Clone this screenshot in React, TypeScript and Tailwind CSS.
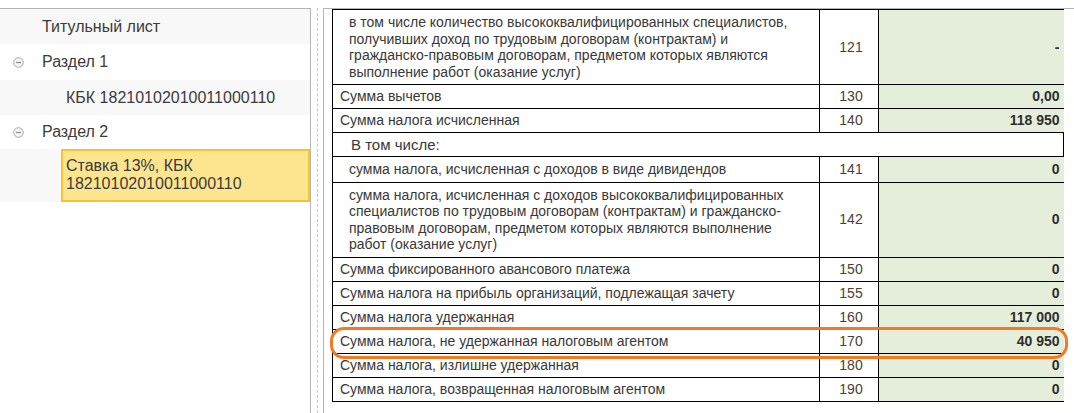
import React from 'react';

interface Row {
  label: string[];
  code?: string;
  value?: string;
  indent?: boolean;
  heading?: boolean;
}

const rows: Row[] = [
  {
    label: [
      'в том числе количество высококвалифицированных специалистов,',
      'получивших доход по трудовым договорам (контрактам) и',
      'гражданско-правовым договорам, предметом которых являются',
      'выполнение работ (оказание услуг)',
    ],
    code: '121',
    value: '-',
    indent: true,
  },
  { label: ['Сумма вычетов'], code: '130', value: '0,00' },
  { label: ['Сумма налога исчисленная'], code: '140', value: '118 950' },
  { label: ['В том числе:'], heading: true },
  { label: ['сумма налога, исчисленная с доходов в виде дивидендов'], code: '141', value: '0', indent: true },
  {
    label: [
      'сумма налога, исчисленная с доходов высококвалифицированных',
      'специалистов по трудовым договорам (контрактам) и гражданско-',
      'правовым договорам, предметом которых являются выполнение',
      'работ (оказание услуг)',
    ],
    code: '142',
    value: '0',
    indent: true,
  },
  { label: ['Сумма фиксированного авансового платежа'], code: '150', value: '0' },
  { label: ['Сумма налога на прибыль организаций, подлежащая зачету'], code: '155', value: '0' },
  { label: ['Сумма налога удержанная'], code: '160', value: '117 000' },
  { label: ['Сумма налога, не удержанная налоговым агентом'], code: '170', value: '40 950' },
  { label: ['Сумма налога, излишне удержанная'], code: '180', value: '0' },
  { label: ['Сумма налога, возвращенная налоговым агентом'], code: '190', value: '0' },
];

function MinusCircle() {
  return (
    <svg width="11" height="11" viewBox="0 0 11 11" className="shrink-0">
      <circle cx="5.5" cy="5.5" r="4.8" fill="#f4f4f4" stroke="#a8a8a8" strokeWidth="1" />
      <path d="M3 5.5h5" stroke="#8a8a8a" strokeWidth="1.2" />
    </svg>
  );
}

export default function App() {
  return (
    <div className="w-[1074px] h-[413px] bg-white flex pt-2 overflow-hidden font-['Liberation_Sans',Arial,sans-serif] text-[#333]">
      {/* Tree panel */}
      <div className="w-[311px] shrink-0 border-t border-r border-[#b4b4b4] text-[16px] text-[#3b3b3b]">
        <div className="h-[35px] bg-[#f8f8f8] flex items-center pl-[42px]">Титульный лист</div>
        <div className="h-[36px] bg-white flex items-center pl-[13px] gap-[18px]">
          <MinusCircle />
          <span>Раздел 1</span>
        </div>
        <div className="h-[35px] bg-[#f8f8f8] flex items-center pl-[66px]">КБК 18210102010011000110</div>
        <div className="h-[34px] bg-white flex items-center pl-[13px] gap-[18px]">
          <MinusCircle />
          <span>Раздел 2</span>
        </div>
        <div className="h-[53px] bg-[#f8f8f8] pl-[61px]">
          <div className="h-full bg-[#fde58f] border-2 border-[#f7c52a] px-[3px] pt-[6px] leading-[18px]">
            Ставка 13%, КБК
            <br />
            18210102010011000110
          </div>
        </div>
      </div>

      {/* Splitter */}
      <div className="w-[12px] shrink-0 flex justify-center">
        <div className="w-0 h-full border-l border-dashed border-[#c8c8c8]" />
      </div>

      {/* Form panel */}
      <div className="flex-1 border-t border-l border-[#b4b4b4] pl-2">
        <div className="relative w-[731px]">
          <table className="w-[731px] table-fixed border-collapse text-[14px] text-[#383838]">
            <colgroup>
              <col className="w-[487px]" />
              <col className="w-[59px]" />
              <col className="w-[185px]" />
            </colgroup>
            <tbody>
              {rows.map((row) =>
                row.heading ? (
                  <tr key={row.label[0]} className="h-[24px]">
                    <td colSpan={3} className="border border-black pl-[18px] text-[15px] leading-[16px]">
                      {row.label[0]}
                    </td>
                  </tr>
                ) : (
                  <tr key={row.code} className="h-[24px]">
                    <td
                      className={`border border-black leading-[16.5px] whitespace-nowrap overflow-hidden ${
                        row.indent ? 'pl-[16px] py-[4px]' : 'pl-[7px]'
                      }`}
                    >
                      {row.label.map((line, i) => (
                        <div key={i}>{line}</div>
                      ))}
                    </td>
                    <td className="border border-black text-center pl-[4px] text-[#4a4038]">{row.code}</td>
                    <td className="border-y border-l border-black bg-[#e5eedb] text-right pr-[4px] font-bold text-[14px] text-[#2e2e2e]">
                      {row.value}
                    </td>
                  </tr>
                ),
              )}
            </tbody>
          </table>

          {/* Highlight around row 170 */}
          <div className="absolute left-[-2px] top-[318px] w-[738px] h-[32px] rounded-[14px] border-[3px] border-[#f47a22] pointer-events-none" />
        </div>
      </div>
    </div>
  );
}
